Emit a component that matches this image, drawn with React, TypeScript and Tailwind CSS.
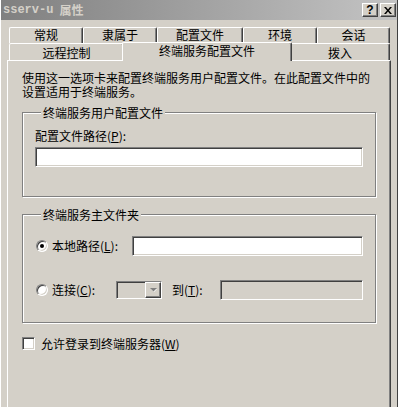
import React from "react";

const font = "font-['Noto_Sans_CJK_SC','SimSun',sans-serif]";

const sunken =
  "border border-t-[#808080] border-l-[#808080] border-r-white border-b-white shadow-[inset_1px_1px_0_#404040,inset_-1px_-1px_0_#d4d0c8]";

const raised =
  "border border-t-white border-l-white border-r-[#404040] border-b-[#404040] shadow-[inset_-1px_-1px_0_#808080]";

function Tab({ label, className }: { label: string; className: string }) {
  return (
    <div
      className={`flex h-full justify-center rounded-t-[2px] border-l border-t border-r border-l-white border-t-white border-r-[#404040] bg-[#d4d0c8] shadow-[inset_-1px_0_0_#808080] text-[12px] leading-[13px] text-black ${className}`}
    >
      {label}
    </div>
  );
}

function Radio({ checked }: { checked?: boolean }) {
  return (
    <span
      className={`flex h-[12px] w-[12px] shrink-0 items-center justify-center rounded-full bg-white ${sunken}`}
    >
      {checked ? <span className="block h-[4px] w-[4px] rounded-full bg-black" /> : null}
    </span>
  );
}

function GroupBox({ title, children, className }: { title: string; children: React.ReactNode; className: string }) {
  return (
    <fieldset
      className={`border border-[#808080] shadow-[inset_1px_1px_0_white,1px_1px_0_white] ${className}`}
    >
      <legend className="ml-[6px] bg-[#d4d0c8] px-[2px] text-[12px] leading-[13px]">{title}</legend>
      {children}
    </fieldset>
  );
}

export default function App() {
  return (
    <div
      className={`flex h-[407px] w-[398px] flex-col overflow-hidden border-l border-l-white border-r border-r-[#404040] bg-[#d4d0c8] text-black ${font}`}
    >
      {/* Title bar (inactive) */}
      <div className="flex h-[20px] shrink-0 items-center justify-between bg-gradient-to-r from-[#808080] to-[#c4c4c4] pl-[2px] pr-[1px]">
        <div className="flex items-center gap-[6px] text-[12px] font-bold leading-none text-[#d4d0c8]">
          <span className="font-['Liberation_Mono',monospace]">sserv-u</span>
          <span>属性</span>
        </div>
        <div className="flex gap-[2px]">
          <div className={`flex h-[14px] w-[16px] items-center justify-center bg-[#d4d0c8] font-['Liberation_Sans',sans-serif] text-[12px] font-bold leading-none ${raised}`}>
            ?
          </div>
          <div className={`flex h-[14px] w-[16px] items-center justify-center bg-[#d4d0c8] ${raised}`}>
            <svg width="8" height="7" viewBox="0 0 8 7">
              <path d="M0 0h2l2 2.5L6 0h2L5 3.5 8 7H6L4 4.5 2 7H0l3-3.5z" fill="#000" />
            </svg>
          </div>
        </div>
      </div>

      {/* Tabs */}
      <div className="mt-[7px] flex flex-col pl-[8px]">
        <div className="flex h-[16px]">
          <Tab label="常规" className="w-[74px]" />
          <Tab label="隶属于" className="w-[74px]" />
          <Tab label="配置文件" className="w-[86px]" />
          <Tab label="环境" className="w-[74px]" />
          <Tab label="会话" className="w-[73px]" />
        </div>
        <div className="flex h-[17px] items-end">
          <Tab label="远程控制" className="h-[17px] w-[115px] pt-[2px]" />
          <div className="relative z-10 -mx-[2px] -mb-px flex h-[19px] w-[170px] justify-center rounded-t-[2px] border-l border-t border-r border-l-white border-t-white border-r-[#404040] bg-[#d4d0c8] pt-[1px] text-[12px] leading-[13px] shadow-[inset_-1px_0_0_#808080]">
            终端服务配置文件
          </div>
          <Tab label="拨入" className="h-[17px] w-[100px] pt-[2px]" />
        </div>
      </div>

      {/* Panel */}
      <div className="mx-[6px] flex flex-1 flex-col border-l border-t border-r border-l-white border-t-white border-r-[#404040] px-[14px] pt-[10px] shadow-[inset_-1px_0_0_#808080]">
        <p className="text-[12px] leading-[14px]">
          使用这一选项卡来配置终端服务用户配置文件。在此配置文件中的
          <br />
          设置适用于终端服务。
        </p>

        <GroupBox title="终端服务用户配置文件" className="mt-[7px] px-[12px] pb-[29px]">
          <div className="pt-[10px] text-[12px] leading-[13px]">
            配置文件路径(<u>P</u>):
          </div>
          <div className={`mt-[5px] h-[20px] bg-white ${sunken}`} />
        </GroupBox>

        <GroupBox title="终端服务主文件夹" className="mt-[11px] px-[12px] pb-[22px]">
          <div className="mt-[15px] flex h-[20px] items-center">
            <span className="ml-px">
              <Radio checked />
            </span>
            <span className="w-[84px] pl-[4px] text-[12px] leading-none">
              本地路径(<u>L</u>):
            </span>
            <div className={`h-[20px] flex-1 bg-white ${sunken}`} />
          </div>
          <div className="mt-[24px] flex h-[20px] items-center">
            <span className="ml-px">
              <Radio />
            </span>
            <span className="w-[68px] pl-[4px] text-[12px] leading-none">
              连接(<u>C</u>):
            </span>
            <div className={`flex h-[18px] w-[46px] items-center justify-end bg-[#d4d0c8] ${sunken}`}>
              <div className={`flex h-[16px] w-[16px] items-center justify-center bg-[#d4d0c8] ${raised}`}>
                <svg width="7" height="5" viewBox="0 0 7 5">
                  <path d="M1 1h6L4 4z" fill="#ffffff" />
                  <path d="M0 0h7L3.5 3.5z" fill="#808080" />
                </svg>
              </div>
            </div>
            <span className="w-[58px] pl-[10px] text-[12px] leading-none">
              到(<u>T</u>):
            </span>
            <div className={`h-[20px] flex-1 bg-[#d4d0c8] ${sunken}`} />
          </div>
        </GroupBox>

        <div className="mt-[14px] flex h-[13px] items-center">
          <span className={`block h-[13px] w-[13px] bg-white ${sunken}`} />
          <span className="pl-[6px] text-[12px] leading-none">
            允许登录到终端服务器(<u>W</u>)
          </span>
        </div>
      </div>
    </div>
  );
}
